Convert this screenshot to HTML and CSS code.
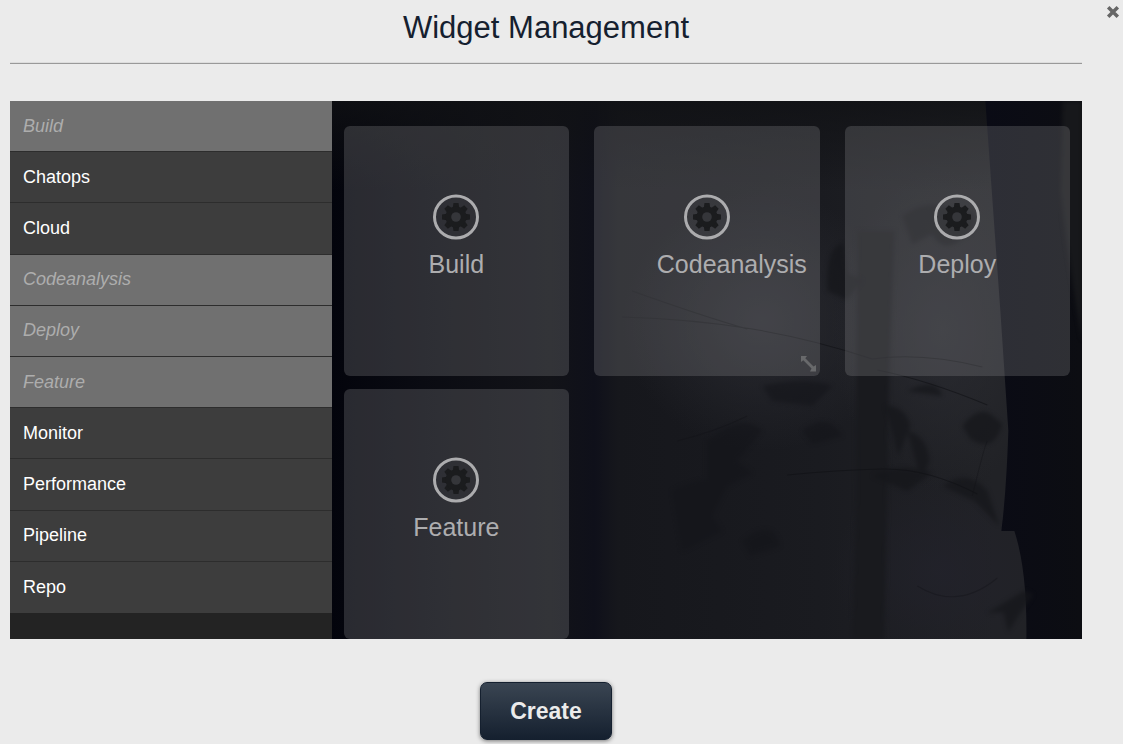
FILE: index.html
```html
<!DOCTYPE html>
<html lang="en">
<head>
<meta charset="utf-8">
<title>Widget Management</title>
<link rel="stylesheet" href="styles.css">
</head>
<body>
<svg class="sprite" aria-hidden="true">
  <symbol id="gear" viewBox="0 0 46 46">
    <ellipse cx="23" cy="23" rx="21.5" ry="21" fill="none" stroke="#acacae" stroke-width="3"/>
    <g fill="#1b1c1e">
      <path id="teeth" d="M20.5 9h5l.8 5v18l-.8 5h-5l-.8-5V14zM9 20.500v5l5 .8h18l5-.8v-5l-5-.8H14z"/>
      <use href="#teeth" transform="rotate(45 23 23)"/>
      <circle cx="23" cy="23" r="10.500"/>
    </g>
    <circle cx="23" cy="23" r="4.800" fill="#35363a"/>
  </symbol>
</svg>
<main class="dialog">
  <button class="close" type="button" aria-label="Close">
    <svg viewBox="0 0 14 14" width="14" height="14"><path d="M2.200 2.200 11.800 11.800M11.800 2.200 2.200 11.800" stroke="#666" stroke-width="3.500" fill="none"/></svg>
  </button>
  <header class="header"><h1 class="title">Widget Management</h1></header>
  <div class="workspace">
    <nav class="sidebar" aria-label="Widgets">
      <div class="menu">
        <button class="item" type="button" disabled>Build</button>
        <button class="item" type="button">Chatops</button>
        <button class="item" type="button">Cloud</button>
        <button class="item" type="button" disabled>Codeanalysis</button>
        <button class="item" type="button" disabled>Deploy</button>
        <button class="item" type="button" disabled>Feature</button>
        <button class="item" type="button">Monitor</button>
        <button class="item" type="button">Performance</button>
        <button class="item" type="button">Pipeline</button>
        <button class="item" type="button">Repo</button>
      </div>
    </nav>
    <section class="board" aria-label="Dashboard layout">
      <svg class="forest" viewBox="0 0 750 538" preserveAspectRatio="none" aria-hidden="true">
        <defs>
          <linearGradient id="night">
            <stop offset="0" stop-color="#03040c"/>
            <stop offset=".12" stop-color="#0a0b12"/>
            <stop offset=".29" stop-color="#121318"/>
            <stop offset=".35" stop-color="#0f101a"/>
            <stop offset=".38" stop-color="#16171c"/>
            <stop offset=".65" stop-color="#1a1b20"/>
            <stop offset=".88" stop-color="#212226"/>
          </linearGradient>
          <linearGradient id="trunk">
            <stop offset="0" stop-color="#0a0b15"/>
            <stop offset="1" stop-color="#0c0d12"/>
          </linearGradient>
          <linearGradient id="top" x2="0" y2="1">
            <stop offset="0" stop-color="#101114" stop-opacity=".8"/>
            <stop offset="1" stop-color="#101114" stop-opacity="0"/>
          </linearGradient>
          <radialGradient id="mist">
            <stop offset="0" stop-color="#2c2d33" stop-opacity=".8"/>
            <stop offset="1" stop-color="#2c2d33" stop-opacity="0"/>
          </radialGradient>
          <radialGradient id="glow">
            <stop offset="0" stop-color="#22222b" stop-opacity=".8"/>
            <stop offset="1" stop-color="#22222b" stop-opacity="0"/>
          </radialGradient>
          <filter id="soft" color-interpolation-filters="sRGB"><feGaussianBlur stdDeviation="2"/></filter>
        </defs>
        <rect width="750" height="538" fill="url(#night)"/>
        <ellipse cx="430" cy="220" rx="140" ry="130" fill="url(#mist)"/>
        <ellipse cx="610" cy="230" rx="110" ry="160" fill="url(#mist)"/>
        <ellipse cx="610" cy="470" rx="110" ry="100" fill="url(#glow)"/>
        <rect width="750" height="90" fill="url(#top)"/>
        <path d="M525 130H562L556 300 552 538H520L524 400Z" fill="#191a1e" filter="url(#soft)"/>
        <path d="M653 0H750V538H694Q695 470 682 430H669Q674 390 676 330L668 210Z" fill="url(#trunk)"/>
        <path d="M730 0H750V240Q734 150 728 90Z" fill="#17181b" filter="url(#soft)"/>
        <g fill="#15161a" filter="url(#soft)" opacity=".7">
          <path d="M495 190q-2-45 16-48l5 30 14 7-15 20zM570 115q20-15 40-10t30 5q8 20-10 28-20 15-30-5l-20 10z"/>
          <path d="M553 305q20 0 25 20l-12 30zM575 290q30-15 35 5zM630 325q15-20 28-12l12 10q-8 30-32 15zM575 330q20 5 22 30l-8 20zM540 375q30-15 60-3l-25 18zM610 385q25-18 45 5l12 35-25-25z"/>
          <path d="M655 512l38-23 8 5q-15 20-25 37l-5-20z"/>
        </g>
        <g fill="#14151a" filter="url(#soft)" opacity=".6">
          <path d="M430 285q45-10 70 0l-20 20-40-5zM375 340q35-30 55-10l-25 30 15 12-45 25zM340 390q40-20 55-5l-15 30 10 15-40 20zM470 330q25-20 40 5l-30 8zM410 440q30-25 38 5l-30 10z"/>
        </g>
        <g fill="none" stroke="#101115" opacity=".6">
          <path d="M290 216q70 2 130 12t120 30q50-7 110 8M300 190q70 25 115 38M545 269q50 10 110 35M455 374q50-5 95-6t95 25"/>
          <path d="M585 485q40 25 80-8M345 340q40-10 70-25M640 395q12-50 15-55" opacity=".6"/>
        </g>
      </svg>
      <div class="cards">
        <article class="card"><svg class="gear" aria-hidden="true"><use href="#gear"/></svg><h2 class="label">Build</h2></article>
        <article class="card"><svg class="gear" aria-hidden="true"><use href="#gear"/></svg><h2 class="label">Codeanalysis</h2>
          <svg class="resize" viewBox="0 0 16 16" aria-hidden="true"><path d="M1 0H7L5.300 2.300 13.500 10.500 16 9V15.500H10L11.500 12.500 3.300 4.300 1 6Z" fill="#68696b"/></svg>
        </article>
        <article class="card"><svg class="gear" aria-hidden="true"><use href="#gear"/></svg><h2 class="label">Deploy</h2></article>
        <article class="card"><svg class="gear" aria-hidden="true"><use href="#gear"/></svg><h2 class="label">Feature</h2></article>
      </div>
    </section>
  </div>
  <footer class="footer"><button class="create" type="button">Create</button></footer>
</main>
</body>
</html>
```

FILE: styles.css
```css
* {
  box-sizing: border-box;
}

body {
  margin: 0;
  background: #ebebeb;
  font-family: "Liberation Sans", Arial, sans-serif;
}

button {
  font-family: inherit;
  cursor: pointer;
}

.sprite {
  position: absolute;
  width: 0;
  height: 0;
}

.dialog {
  position: relative;
  padding: 0 41px 4px 10px;
}

.close {
  position: absolute;
  top: 5px;
  right: 3px;
  display: flex;
  padding: 0;
  border: 0;
  background: none;
}

.header {
  padding: 10px 0 18px;
  border-bottom: 1px solid #999;
  box-shadow: inset 0 -1px #ddd;
}

.title {
  margin: 0;
  color: #15202f;
  font-size: 31px;
  font-weight: 400;
  line-height: 35px;
  text-align: center;
}

.workspace {
  display: grid;
  grid-template-columns: 3fr 7fr;
  margin-top: 37px;
}

.sidebar {
  background: #232323;
}

.menu {
  display: grid;
  grid-auto-rows: 1fr;
  height: 512px;
}

.item {
  padding: 0 13px;
  border: 0;
  border-bottom: 1px solid #2d2d2d;
  background: #3d3d3d;
  color: #fff;
  font-size: 18px;
  text-align: left;
}

.item:last-child {
  border-bottom: 0;
}

.item:disabled {
  background: #707070;
  color: #adadad;
  font-style: italic;
  cursor: default;
}

.board {
  position: relative;
  background: #0f1015;
}

.forest {
  position: absolute;
  inset: 0;
  width: 100%;
  height: 100%;
}

.cards {
  position: relative;
  display: grid;
  grid-template-columns: repeat(3, 1fr);
  grid-auto-rows: 250px;
  gap: 13px 25px;
  padding: 25px 12px 0;
}

.card {
  position: relative;
  display: flex;
  flex-direction: column;
  align-items: center;
  padding-top: 68px;
  border-radius: 6px;
  background: rgba(128, 128, 132, 0.3);
}

.gear {
  width: 46px;
  height: 46px;
}

.label {
  width: 100px;
  margin: 9px 0 0;
  color: #adadaf;
  font-size: 25px;
  font-weight: 400;
  line-height: 30px;
  text-align: center;
  white-space: nowrap;
}

.resize {
  position: absolute;
  right: 4px;
  bottom: 4px;
  width: 16px;
  height: 16px;
}

.footer {
  display: flex;
  justify-content: center;
  margin-top: 43px;
}

.create {
  padding: 14px 29px;
  border: 1px solid #15202f;
  border-radius: 7px;
  background: linear-gradient(#3a4552, #15202f);
  box-shadow: 0 1px 4px rgba(0, 0, 0, 0.5);
  color: #ebebeb;
  font-size: 23px;
  font-weight: 700;
  line-height: 28px;
}
```
